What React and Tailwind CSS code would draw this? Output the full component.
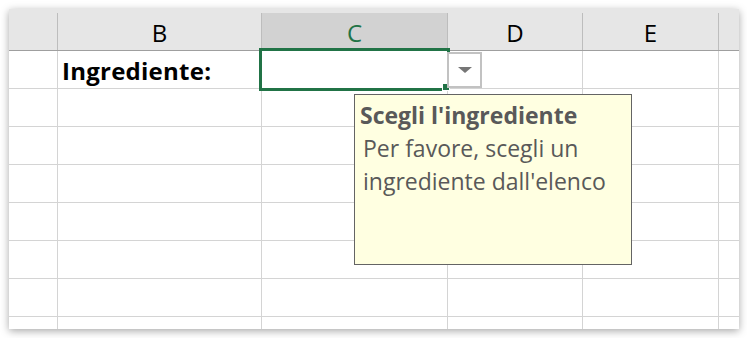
import React from 'react';

const cols = [
  { key: 'rh', label: '', w: 'w-[49px]' },
  { key: 'B', label: 'B', w: 'w-[204px]' },
  { key: 'C', label: 'C', w: 'w-[186px]' },
  { key: 'D', label: 'D', w: 'w-[135px]' },
  { key: 'E', label: 'E', w: 'w-[136px]' },
  { key: 'X', label: '', w: 'w-[40px]' },
];

const rows = [1, 2, 3, 4, 5, 6, 7, 8];

// cella attiva con convalida dati: bordo verde, pulsante elenco e messaggio di input
function CellaAttiva() {
  return (
    <>
      <div className="absolute -left-[3px] -top-[3px] w-[191px] h-[43px] border-[3px] border-[#217346] z-10">
        <div className="absolute -right-[3px] -bottom-[3px] w-[8px] h-[8px] bg-[#217346] border border-white" />
      </div>

      <div className="absolute left-[185px] top-[1px] w-[35px] h-[36px] bg-white border-2 border-[#c2c2c2] flex items-center justify-center z-10">
        <div className="w-0 h-0 border-l-[7px] border-r-[7px] border-t-[6px] border-l-transparent border-r-transparent border-t-[#767676]" />
      </div>

      <div className="absolute left-[92px] top-[43px] w-[278px] h-[171px] bg-[#ffffe1] border border-[#646464] text-[#595959] pl-[5px] pt-[4px] z-20">
        <div className="text-[23px] font-bold leading-[33px] whitespace-nowrap">Scegli l'ingrediente</div>
        <div className="pl-[3px] text-[23px] leading-[33px] whitespace-nowrap">
          Per favore, scegli un
          <br />
          ingrediente dall'elenco
        </div>
      </div>
    </>
  );
}

export default function App() {
  return (
    <div className="w-[747px] h-[338px] bg-white pl-[9px] pt-[9px]">
      <div
        className="w-[730px] h-[320px] overflow-hidden bg-white shadow-[0_2px_8px_rgba(0,0,0,0.35)]"
        style={{ fontFamily: '"Open Sans", sans-serif' }}
      >
        {/* intestazione colonne */}
        <div className="bg-[#e6e6e6] pt-[4px]">
          <div className="flex h-[38px] border-b border-[#9f9f9f]">
            {cols.map((c) => (
              <div
                key={c.key}
                className={`${c.w} shrink-0 border-r ${c.key === 'X' ? 'border-transparent' : 'border-[#bdbdbd]'} ${
                  c.key === 'C' ? 'bg-[#d2d2d2] text-[#217346]' : 'text-black'
                } flex items-center justify-center pt-[3px] text-[24px] leading-none`}
              >
                {c.label}
              </div>
            ))}
          </div>
        </div>

        {/* celle */}
        {rows.map((r) => (
          <div key={r} className="flex h-[38px] border-b border-[#d4d4d4]">
            {cols.map((c) => (
              <div
                key={c.key}
                className={`${c.w} shrink-0 border-r border-[#d4d4d4] flex items-center ${
                  r === 1 && c.key === 'C' ? 'relative' : ''
                }`}
              >
                {r === 1 && c.key === 'B' && (
                  <span className="pl-[4px] pt-[2px] text-[24px] font-bold text-black leading-none tracking-[0.25px]">
                    Ingrediente:
                  </span>
                )}
                {r === 1 && c.key === 'C' && <CellaAttiva />}
              </div>
            ))}
          </div>
        ))}
      </div>
    </div>
  );
}
